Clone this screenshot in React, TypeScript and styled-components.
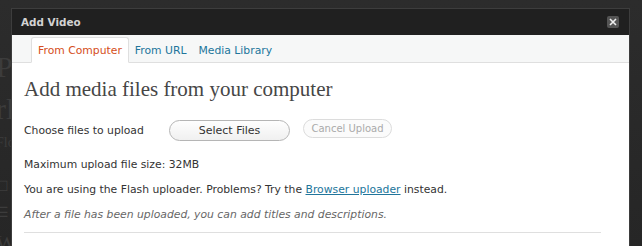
import React from "react";
import styled, { createGlobalStyle } from "styled-components";

const GlobalStyle = createGlobalStyle`
  html, body {
    margin: 0;
    padding: 0;
    background: #2a2a2a;
  }
  body {
    width: 642px;
    height: 246px;
    overflow: hidden;
    position: relative;
    font-family: "DejaVu Sans", "Liberation Sans", sans-serif;
  }
`;

const Backdrop = styled.div`
  width: 642px;
  height: 246px;
  display: flex;
  flex-direction: column;
  padding: 52px 0 0 0;
  box-sizing: border-box;
  overflow: hidden;
  color: #3c3c3c;
  font-family: "Liberation Serif", serif;
  background: linear-gradient(#2c2c2c, #262626);
`;

const BackdropLine = styled.div<{ $size: number; $gap: number }>`
  font-size: ${(p) => p.$size}px;
  line-height: 1;
  margin-bottom: ${(p) => p.$gap}px;
  margin-left: -4px;
  white-space: nowrap;
`;

const Modal = styled.div`
  position: absolute;
  left: 11px;
  top: 8px;
  width: 619px;
  height: 238px;
  overflow: hidden;
  border: 1px solid #3d3d3d;
  border-bottom: none;
  box-sizing: border-box;
  background: #fff;
  display: flex;
  flex-direction: column;
`;

const TitleBar = styled.div`
  height: 26px;
  flex: 0 0 26px;
  background: #202020;
  display: flex;
  align-items: center;
  justify-content: space-between;
  padding: 0 10px 0 9px;
`;

const Title = styled.span`
  color: #d2d2d2;
  font-size: 10.4px;
  font-weight: bold;
`;

const CloseButton = styled.span`
  width: 12px;
  height: 12px;
  border-radius: 2px;
  background: #545454;
  color: #e6e6e6;
  display: flex;
  align-items: center;
  justify-content: center;
`;

const TabBar = styled.div`
  height: 28px;
  flex: 0 0 28px;
  background: #f6f7f7;
  border-bottom: 1px solid #dfdfdf;
  box-sizing: border-box;
  display: flex;
  align-items: flex-end;
  padding-left: 19px;
`;

const Tab = styled.div<{ $active?: boolean }>`
  height: 26px;
  box-sizing: border-box;
  padding: 0 6px;
  margin-bottom: -1px;
  display: flex;
  align-items: center;
  font-size: 10.8px;
  border: ${(p) => (p.$active ? "1px solid #dfdfdf" : "none")};
  border-bottom: ${(p) => (p.$active ? "1px solid #fff" : "none")};
  border-radius: 3px 3px 0 0;
  background: ${(p) => (p.$active ? "#fff" : "transparent")};
  color: ${(p) => (p.$active ? "#d54e21" : "#21759b")};
`;

const Content = styled.div`
  padding: 11px 28px 0 12px;
  color: #333;
`;

const Heading = styled.h3`
  margin: 0 0 13px;
  font-family: "Liberation Serif", serif;
  font-weight: normal;
  font-size: 21px;
  color: #464646;
  line-height: 30px;
`;

const UploadRow = styled.div`
  display: flex;
  align-items: center;
  font-size: 10.8px;
  height: 26px;
  margin-bottom: 14px;
`;

const UploadLabel = styled.span`
  width: 145px;
`;

const PillButton = styled.button<{ $disabled?: boolean }>`
  font-family: inherit;
  font-size: ${(p) => (p.$disabled ? "10px" : "11px")};
  height: ${(p) => (p.$disabled ? "19px" : "21px")};
  width: ${(p) => (p.$disabled ? "89px" : "121px")};
  border-radius: 11px;
  border: 1px solid ${(p) => (p.$disabled ? "#dcdcdc" : "#b5b5b5")};
  background: ${(p) => (p.$disabled ? "#fbfbfb" : "linear-gradient(#fefefe, #f0f0f0)")};
  color: ${(p) => (p.$disabled ? "#aaa" : "#333")};
  margin-right: 13px;
  padding: 0;
  margin-top: ${(p) => (p.$disabled ? "-3px" : "0")};
`;

const Para = styled.p<{ $italic?: boolean }>`
  margin: 0 0 10px;
  font-size: 10.8px;
  line-height: 15px;
  font-style: ${(p) => (p.$italic ? "italic" : "normal")};
  color: ${(p) => (p.$italic ? "#666" : "#333")};
`;

const Link = styled.a`
  color: #21759b;
  text-decoration: underline;
`;

const Divider = styled.hr`
  border: none;
  border-top: 1px solid #dfdfdf;
  margin: 9px 0 0;
`;

export default function App() {
  return (
    <>
      <GlobalStyle />
      <Backdrop>
        <BackdropLine $size={30} $gap={12}>Po</BackdropLine>
        <BackdropLine $size={30} $gap={12}>rl</BackdropLine>
        <BackdropLine $size={14} $gap={30}>Flo</BackdropLine>
        <BackdropLine $size={14} $gap={12}>☐</BackdropLine>
        <BackdropLine $size={14} $gap={12}>☰</BackdropLine>
        <BackdropLine $size={22} $gap={0}>We</BackdropLine>
      </Backdrop>
      <Modal>
        <TitleBar>
          <Title>Add Video</Title>
          <CloseButton>
            <svg width="8" height="8" viewBox="0 0 8 8">
              <path d="M1 1L7 7M7 1L1 7" stroke="#eee" strokeWidth="1.6" />
            </svg>
          </CloseButton>
        </TitleBar>
        <TabBar>
          <Tab $active>From Computer</Tab>
          <Tab>From URL</Tab>
          <Tab>Media Library</Tab>
        </TabBar>
        <Content>
          <Heading>Add media files from your computer</Heading>
          <UploadRow>
            <UploadLabel>Choose files to upload</UploadLabel>
            <PillButton>Select Files</PillButton>
            <PillButton $disabled disabled>Cancel Upload</PillButton>
          </UploadRow>
          <Para>Maximum upload file size: 32MB</Para>
          <Para>
            You are using the Flash uploader. Problems? Try the{" "}
            <Link href="#">Browser uploader</Link> instead.
          </Para>
          <Para $italic>After a file has been uploaded, you can add titles and descriptions.</Para>
          <Divider />
        </Content>
      </Modal>
    </>
  );
}
